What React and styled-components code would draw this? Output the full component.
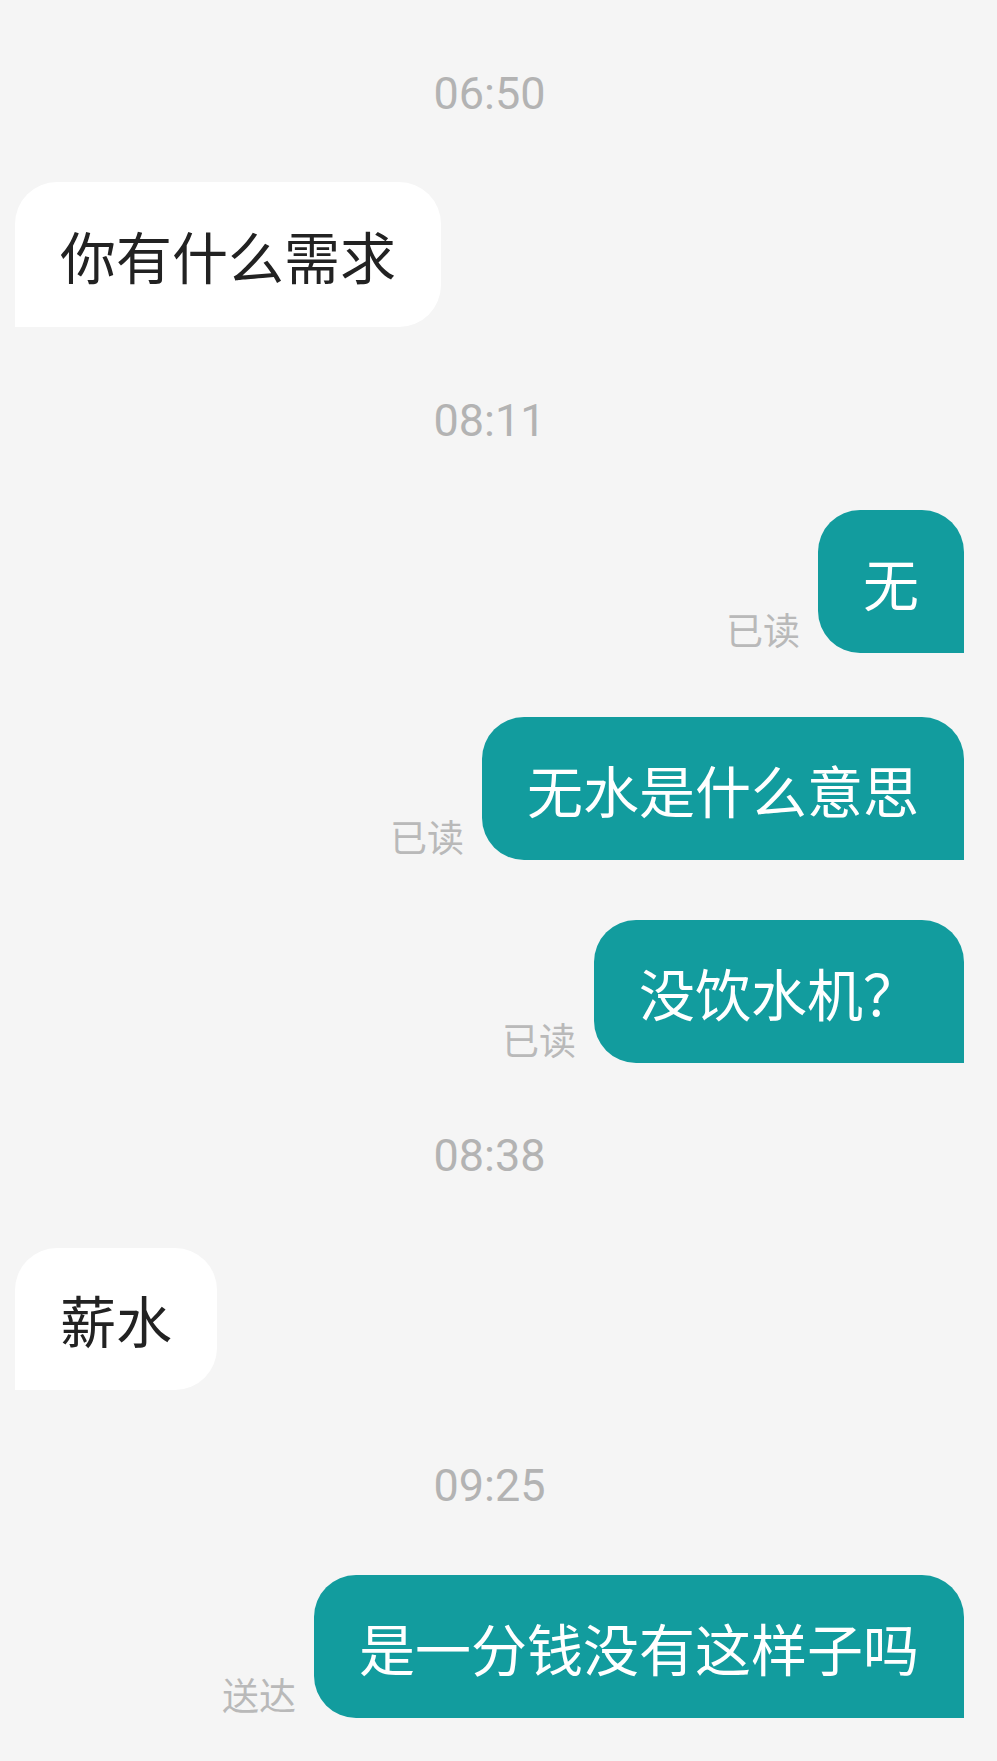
import React from 'react';
import styled, { createGlobalStyle } from 'styled-components';

const GlobalStyle = createGlobalStyle`
    html, body {
        margin: 0;
        padding: 0;
        background-color: #f5f5f5;
    }
`;

const Page = styled.div`
    display: flex;
    flex-direction: column;
    min-height: 1761px;
    box-sizing: border-box;
    padding: 64px 33px 0 15px;
    background-color: #f5f5f5;
    font-family: "Noto Sans CJK SC", "Noto Sans", sans-serif;
`;

const Time = styled.div`
    margin-top: ${(p) => p.$top || 0}px;
    height: 60px;
    line-height: 60px;
    text-align: center;
    font-family: Roboto, "Liberation Sans", sans-serif;
    font-size: 45px;
    color: #b3b3b3;
`;

const Row = styled.div`
    display: flex;
    align-items: flex-end;
    justify-content: ${(p) => (p.$mine ? 'flex-end' : 'flex-start')};
    gap: 18px;
    margin-top: ${(p) => p.$top || 0}px;
`;

const Bubble = styled.div`
    display: flex;
    align-items: center;
    height: ${(p) => p.$height || 143}px;
    box-sizing: border-box;
    padding: 0 45px;
    font-size: 56px;
    line-height: 1;
    white-space: nowrap;
    background-color: ${(p) => (p.$mine ? '#129c9e' : '#ffffff')};
    color: ${(p) => (p.$mine ? '#ffffff' : '#222222')};
    border-radius: ${(p) => (p.$mine ? '42px 42px 0 42px' : '42px 42px 42px 0')};
`;

const Status = styled.span`
    font-size: 37px;
    line-height: 1;
    color: #b9b9b9;
    margin-bottom: 5px;
`;

const messages = [
    { type: 'time', text: '06:50', top: 0 },
    { type: 'msg', text: '你有什么需求', top: 58, height: 145 },
    { type: 'time', text: '08:11', top: 64 },
    { type: 'msg', mine: true, text: '无', status: '已读', top: 59 },
    { type: 'msg', mine: true, text: '无水是什么意思', status: '已读', top: 64 },
    { type: 'msg', mine: true, text: '没饮水机？', status: '已读', top: 60 },
    { type: 'time', text: '08:38', top: 63 },
    { type: 'msg', text: '薪水', top: 62, height: 142 },
    { type: 'time', text: '09:25', top: 66 },
    { type: 'msg', mine: true, text: '是一分钱没有这样子吗', status: '送达', top: 59 },
];

function App() {
    return (
        <Page>
            <GlobalStyle />
            {messages.map((m, index) =>
                m.type === 'time' ? (
                    <Time key={index} $top={m.top}>{m.text}</Time>
                ) : (
                    <Row key={index} $mine={m.mine} $top={m.top}>
                        {m.status && <Status>{m.status}</Status>}
                        <Bubble $mine={m.mine} $height={m.height}>{m.text}</Bubble>
                    </Row>
                )
            )}
        </Page>
    );
}

export default App;
